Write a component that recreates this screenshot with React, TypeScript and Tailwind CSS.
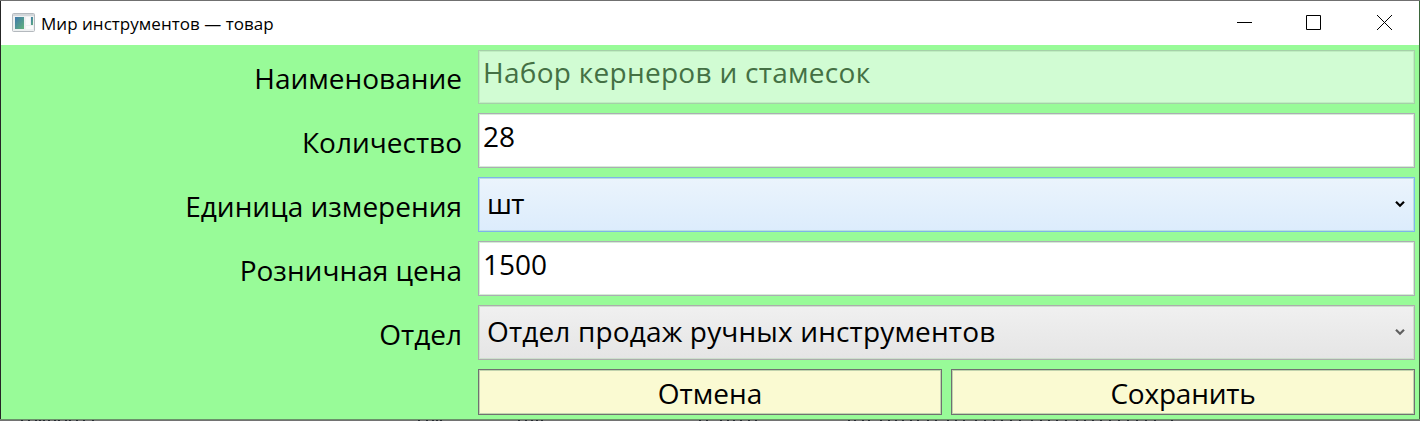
import type { ReactNode } from "react";

function AppIcon() {
  return (
    <svg width="23" height="19" viewBox="0 0 23 19" className="mt-3 ml-[11px] block shrink-0">
      <defs>
        <linearGradient id="pane" x1="0" y1="0" x2="1" y2="1">
          <stop offset="0" stopColor="#3f78ad" />
          <stop offset="1" stopColor="#62b27a" />
        </linearGradient>
      </defs>
      <rect x="0.5" y="0.5" width="22" height="18" rx="1" fill="#eef0f1" stroke="#b4b9be" />
      <rect x="1" y="1" width="21" height="2" fill="#d3d7da" />
      <rect x="3" y="4" width="9" height="12" fill="url(#pane)" />
      <rect x="14" y="4" width="4" height="8" fill="#fafafa" />
      <rect x="19" y="4" width="2" height="8" fill="url(#pane)" />
      <rect x="14" y="13" width="7" height="3" fill="#fafafa" />
    </svg>
  );
}

function Chevron({ color }: { color: string }) {
  return (
    <svg width="10" height="8" viewBox="0 0 10 8" className="mr-[9px] mb-[2px] ml-auto block shrink-0">
      <path d="M1 1.8 L5 5.8 L9 1.8" fill="none" stroke={color} strokeWidth="2.2" />
    </svg>
  );
}

function Label({ children, top }: { children: ReactNode; top: string }) {
  return (
    <div className={"flex w-[477px] shrink-0 justify-end pr-[16px] text-[28px] leading-[40px] " + top}>
      <span>{children}</span>
    </div>
  );
}

const MARKS = [21, 28, 35, 39, 43, 48, 54, 58, 65, 69, 76, 83, 92, 418, 426, 432, 436, 440, 518, 525, 531, 536, 541, 699, 706, 720, 727, 733, 740, 748, 755, 848, 854, 862, 868, 880, 888, 895, 902, 910, 917, 927, 935, 947, 955, 963, 975, 984, 993, 1001, 1010, 1019, 1031, 1040, 1048, 1056, 1065, 1076, 1084, 1092, 1100, 1109, 1118, 1127, 1136, 1145, 1154, 1171];

export default function App() {
  return (
    <div className="flex h-[421px] w-[1420px] flex-col overflow-hidden bg-[#727272] font-['Open_Sans','Noto_Sans',sans-serif] whitespace-nowrap text-black">
      <div className="h-px shrink-0 bg-[#707070]" />
      <div className="h-[418px] shrink-0 border-r border-l border-r-[#3b663b] border-l-[#252525] bg-[#98fb98]">
        <header className="flex h-11 bg-white">
          <AppIcon />
          <span className="mt-3 ml-[6px] text-[17px] leading-[22px] tracking-[0.03px]">Мир инструментов — товар</span>
          <svg width="156" height="17" viewBox="0 0 156 17" className="mt-[13px] mr-[27px] ml-auto block shrink-0" fill="none" stroke="#000">
            <path d="M1 8.5h15" />
            <path d="M70.5 1.5h14v14h-14z" />
            <path d="M141 1l15 15M156 1l-15 15" />
          </svg>
        </header>
        <main className="flex flex-col gap-[9px] pt-[5px]">
          <div className="flex h-[54px]">
            <Label top="pt-[8px]">Наименование</Label>
            <div className="w-[937px] border border-[#a5d0a8] bg-[#d1fcd3] pl-[4px] text-[28px] leading-[42px] tracking-[0.28px] text-[#447044] shadow-[inset_0_0_0_1px_#bfeec1]">Набор кернеров и стамесок</div>
          </div>
          <div className="flex h-[55px]">
            <Label top="pt-[9px]">Количество</Label>
            <div className="w-[937px] border border-[#abadb3] bg-white pl-[4px] text-[28px] leading-[44px] shadow-[inset_0_0_0_1px_#d5ecd6]">28</div>
          </div>
          <div className="flex h-[55px]">
            <Label top="pt-[9px]">Единица измерения</Label>
            <div className="flex w-[937px] items-center border border-[#7eb4ea] bg-linear-to-b from-[#ebf4fc] to-[#dcecfc] pl-[8px] text-[28px] tracking-[-0.6px] shadow-[inset_0_0_0_1px_#b9e0e0]">
              <span className="pb-[4px] leading-[40px]">шт</span>
              <Chevron color="#000" />
            </div>
          </div>
          <div className="flex h-[55px]">
            <Label top="pt-[9px]">Розничная цена</Label>
            <div className="w-[937px] border border-[#abadb3] bg-white pl-[4px] text-[28px] leading-[44px] shadow-[inset_0_0_0_1px_#d5ecd6]">1500</div>
          </div>
          <div className="flex h-[55px]">
            <Label top="pt-[9px]">Отдел</Label>
            <div className="flex w-[937px] items-center border border-[#acacac] bg-linear-to-b from-[#f0f0f0] to-[#e5e5e5] pl-[8px] text-[28px] tracking-[0.15px] shadow-[inset_0_0_0_1px_#cde0cd]">
              <span className="pb-[4px] leading-[40px]">Отдел продаж ручных инструментов</span>
              <Chevron color="#606060" />
            </div>
          </div>
          <div className="flex h-[46px] gap-[9px] pl-[477px]">
            <button className="w-[464px] border border-[#707070] bg-[#fafad2] pt-[2px] text-[28px] leading-[40px] shadow-[inset_0_0_0_1px_#c1d3ae]">Отмена</button>
            <button className="w-[464px] border border-[#707070] bg-[#fafad2] pt-[2px] text-[28px] leading-[40px] tracking-[-0.2px] shadow-[inset_0_0_0_1px_#c1d3ae]">Сохранить</button>
          </div>
        </main>
      </div>
      <svg width="1420" height="2" viewBox="0 0 1420 2" className="block shrink-0">
        <rect width="1420" height="1" fill="#6a906a" />
        <rect y="1" width="1420" height="1" fill="#727272" />
        {MARKS.map((x) => (
          <rect key={x} x={x} y="1" width="2" height="1" fill="#252a30" />
        ))}
      </svg>
    </div>
  );
}
